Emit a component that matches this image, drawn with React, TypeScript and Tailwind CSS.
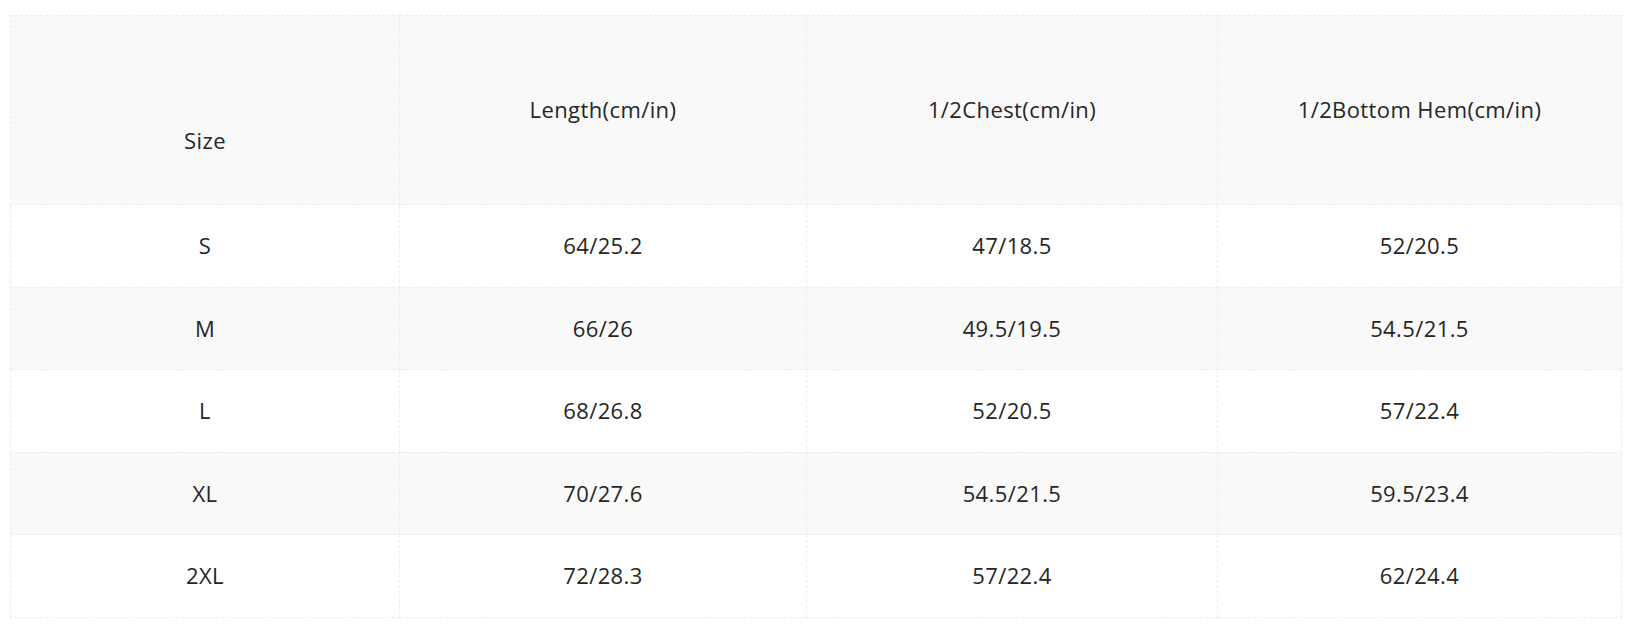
import React from 'react';

const rows = [
  ['S', '64/25.2', '47/18.5', '52/20.5'],
  ['M', '66/26', '49.5/19.5', '54.5/21.5'],
  ['L', '68/26.8', '52/20.5', '57/22.4'],
  ['XL', '70/27.6', '54.5/21.5', '59.5/23.4'],
  ['2XL', '72/28.3', '57/22.4', '62/24.4'],
];

const cell = 'border border-dashed border-[#ececec] text-center align-middle p-0';

const App: React.FC = () => {
  return (
    <div className="w-[1639px] h-[634px] bg-white pt-[15px] pl-[10px] font-['Open_Sans',sans-serif] text-[22px] tracking-[0.4px] text-[#262626]">
      <table className="w-[1611px] table-fixed border-collapse border border-dashed border-t-[#c4c4c4] border-l-[#c4c4c4] border-r-[#e4e4e4] border-b-[#e4e4e4]">
        <colgroup>
          <col className="w-[389px]" />
          <col className="w-[407px]" />
          <col className="w-[411px]" />
          <col className="w-[404px]" />
        </colgroup>
        <thead>
          <tr className="h-[189px] bg-[#f9f9f9]">
            <th className={`${cell} font-normal pt-[60px]`}>Size</th>
            <th className={`${cell} font-normal pb-[2px]`}>Length(cm/in)</th>
            <th className={`${cell} font-normal pb-[2px]`}>1/2Chest(cm/in)</th>
            <th className={`${cell} font-normal pb-[2px]`}>1/2Bottom Hem(cm/in)</th>
          </tr>
        </thead>
        <tbody>
          {rows.map((r, i) => (
            <tr key={r[0]} className={`h-[82.5px] ${i % 2 === 1 ? 'bg-[#f9f9f9]' : 'bg-white'}`}>
              {r.map((v, j) => (
                <td key={j} className={cell}>{v}</td>
              ))}
            </tr>
          ))}
        </tbody>
      </table>
    </div>
  );
};

export default App;
